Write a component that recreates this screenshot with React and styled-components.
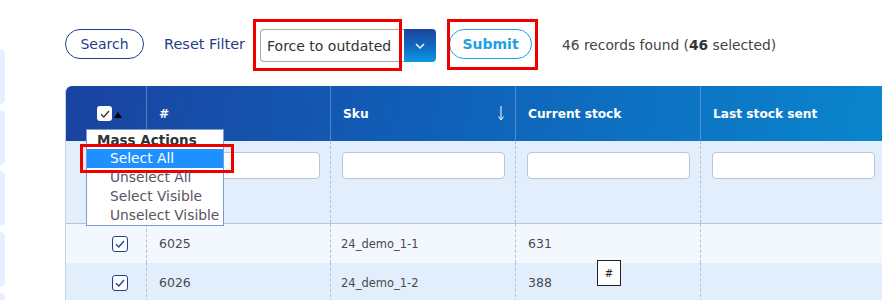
import React from "react";
import styled, { createGlobalStyle } from "styled-components";

const GlobalStyle = createGlobalStyle`
  html, body { margin: 0; padding: 0; background: #fff; }
  body { font-family: "DejaVu Sans", "Open Sans", sans-serif; overflow: hidden; width: 882px; height: 300px; }
  * { box-sizing: border-box; }
`;

const Page = styled.div`
  display: flex;
  width: 882px;
  height: 300px;
  overflow: hidden;
`;

const Rail = styled.div`
  display: flex;
  flex-direction: column;
  gap: 6px;
  padding-top: 49px;
  width: 5px;
  flex: none;
`;

const RailTab = styled.div`
  flex: none;
  height: 55px;
  background: #e4efff;
  border-radius: 0 6px 6px 0;
`;

const Main = styled.div`
  margin-left: 60px;
  padding-top: 29px;
  flex: 1;
  min-width: 0;
`;

const Toolbar = styled.div`
  display: flex;
  align-items: flex-start;
  height: 33px;
`;

const PillButton = styled.button`
  height: 30px;
  width: ${(p) => p.$w}px;
  padding: 0;
  border-radius: 15px;
  background: #fff;
  border: 1px solid ${(p) => p.$color};
  color: ${(p) => p.$color};
  font-family: inherit;
  font-size: 14px;
  font-weight: ${(p) => p.$weight};
  cursor: pointer;
`;

const LinkText = styled.span`
  color: #1f3d8a;
  font-size: 14.5px;
  font-weight: 500;
  line-height: 30px;
  margin: 0 15px 0 20px;
  white-space: nowrap;
`;

const Highlight = styled.div`
  position: relative;
  display: flex;
  margin-left: ${(p) => p.$ml ?? 0}px;
  &::after {
    content: "";
    position: absolute;
    left: ${(p) => p.$l}px;
    top: ${(p) => p.$t}px;
    right: ${(p) => p.$r}px;
    bottom: ${(p) => p.$b}px;
    border: 3px solid #ee0000;
    pointer-events: none;
  }
`;

const SelectBox = styled.div`
  width: 144px;
  height: 33px;
  border: 1px solid #a9a9a9;
  border-right: none;
  border-radius: 4px 0 0 4px;
  display: flex;
  align-items: center;
  padding-left: 6px;
  color: #333;
  font-size: 14px;
  white-space: nowrap;
`;

const SelectArrow = styled.div`
  width: 32px;
  height: 33px;
  border-radius: 0 4px 4px 0;
  background: linear-gradient(180deg, #1f449c 0%, #1167bf 50%, #0a9be3 100%);
  display: flex;
  align-items: center;
  justify-content: center;
`;

const Count = styled.span`
  color: #444;
  font-size: 13.8px;
  line-height: 32px;
  margin-left: 30px;
  white-space: nowrap;
  b { font-weight: 700; color: #333; }
`;

const Table = styled.div`
  position: relative;
  margin-top: 24px;
  display: grid;
  grid-template-columns: 81px 184px 185px 185px 185px;
  width: 820px;
  border-left: 1px solid #c2d0e4;
  border-top-left-radius: 6px;
`;

const HeadRow = styled.div`
  grid-column: 1 / -1;
  display: grid;
  grid-template-columns: subgrid;
  height: 55px;
  background: linear-gradient(100deg, #1a43a0 0%, #1060b8 45%, #0a86cd 100%);
  border-top-left-radius: 6px;
`;

const HeadCell = styled.div`
  display: flex;
  align-items: center;
  padding-left: ${(p) => p.$pl ?? 12}px;
  padding-right: 10px;
  color: #fff;
  font-size: 12.2px;
  font-weight: 700;
  border-right: 1px solid rgba(160, 190, 235, 0.45);
  justify-content: ${(p) => (p.$between ? "space-between" : "flex-start")};
`;

const FilterRow = styled.div`
  grid-column: 1 / -1;
  display: grid;
  grid-template-columns: subgrid;
  height: 83px;
  background: #e3eefc;
  border-bottom: 1px solid #b6c4d9;
`;

const Cell = styled.div`
  border-right: 1px dashed #b3bfd2;
  display: flex;
  align-items: ${(p) => (p.$top ? "flex-start" : "center")};
  padding-left: ${(p) => p.$pl ?? 12}px;
  padding-top: ${(p) => (p.$top ? 11 : 0)}px;
  padding-right: ${(p) => p.$pr ?? 0}px;
  color: #4a4a4a;
  font-size: ${(p) => p.$fs ?? 12.5}px;
`;

const FilterInput = styled.div`
  width: 100%;
  height: 27px;
  background: #fff;
  border: 1px solid #b8c6da;
  border-radius: 4px;
`;

const Row = styled.div`
  grid-column: 1 / -1;
  display: grid;
  grid-template-columns: subgrid;
  height: ${(p) => p.$h}px;
  background: ${(p) => (p.$alt ? "#e3eefc" : "#f3f8ff")};
`;

const Check = styled.div`
  width: 16px;
  height: 16px;
  border: 1.5px solid #1f3f8f;
  border-radius: 3px;
  background: #fff;
  display: flex;
  align-items: center;
  justify-content: center;
`;

const HeadCheck = styled.div`
  width: 15px;
  height: 15px;
  border-radius: 3px;
  background: #fff;
  display: flex;
  align-items: center;
  justify-content: center;
`;

const Caret = styled.span`
  width: 0;
  height: 0;
  margin-left: 2px;
  border-left: 4px solid transparent;
  border-right: 4px solid transparent;
  border-bottom: 6px solid #000;
  margin-top: 2px;
`;

const MassMenu = styled.div`
  position: absolute;
  left: 20px;
  top: 43px;
  width: 138px;
  background: #fff;
  border: 1px solid #7d9bd3;
  padding-top: 1px;
  z-index: 2;
`;

const MenuTitle = styled.div`
  font-size: 13.5px;
  font-weight: 700;
  color: #333;
  padding-left: 10px;
  height: 18px;
  line-height: 18px;
`;

const MenuItem = styled.div`
  position: relative;
  height: 19px;
  line-height: 19px;
  font-size: 13.8px;
  padding-left: 23px;
  color: ${(p) => (p.$active ? "#fff" : "#5a5460")};
  background: ${(p) => (p.$active ? "#1e90ff" : "transparent")};
  white-space: nowrap;
`;

const MenuMark = styled.div`
  position: absolute;
  left: -7px;
  top: -5px;
  width: 154px;
  height: 29px;
  border: 3px solid #ee0000;
  pointer-events: none;
`;

const Tip = styled.div`
  position: absolute;
  left: 531px;
  top: 174px;
  width: 24px;
  height: 26px;
  background: #fff;
  border: 1px solid #222;
  font-size: 10px;
  color: #222;
  display: flex;
  align-items: center;
  justify-content: center;
  z-index: 2;
`;

const CheckMark = ({ color }) => (
  <svg width="10" height="8" viewBox="0 0 10 8">
    <path d="M1 4.2 L3.8 7 L9 1" fill="none" stroke={color} strokeWidth="1.3" />
  </svg>
);

const Chevron = () => (
  <svg width="10" height="6" viewBox="0 0 10 6">
    <path d="M1 1 L5 5 L9 1" fill="none" stroke="#fff" strokeWidth="1.4" />
  </svg>
);

const DownArrow = () => (
  <svg width="8" height="15" viewBox="0 0 8 15">
    <path d="M4 0 V13 M1.5 10.5 L4 14 L6.5 10.5" fill="none" stroke="#fff" strokeWidth="1" />
  </svg>
);

const rows = [
  { id: "6025", sku: "24_demo_1-1", stock: "631", h: 39 },
  { id: "6026", sku: "24_demo_1-2", stock: "388", h: 39, alt: true },
];

export default function App() {
  return (
    <>
      <GlobalStyle />
      <Page>
        <Rail>
          {[0, 1, 2, 3, 4].map((i) => (
            <RailTab key={i} />
          ))}
        </Rail>
        <Main>
          <Toolbar>
            <PillButton $color="#1f3d8a" $weight={500} $w={79}>
              Search
            </PillButton>
            <LinkText>Reset Filter</LinkText>
            <Highlight $l={-7} $t={-10} $r={34} $b={-9}>
              <SelectBox>Force to outdated</SelectBox>
              <SelectArrow>
                <Chevron />
              </SelectArrow>
            </Highlight>
            <Highlight $ml={13} $l={-2} $t={-10} $r={-6} $b={-11}>
              <PillButton $color="#22a0e3" $weight={700} $w={83}>
                Submit
              </PillButton>
            </Highlight>
            <Count>
              46 records found (<b>46</b> selected)
            </Count>
          </Toolbar>

          <Table>
            <HeadRow>
              <HeadCell $pl={31}>
                <HeadCheck>
                  <CheckMark color="#333" />
                </HeadCheck>
                <Caret />
              </HeadCell>
              <HeadCell>#</HeadCell>
              <HeadCell $between>
                <span>Sku</span>
                <DownArrow />
              </HeadCell>
              <HeadCell>Current stock</HeadCell>
              <HeadCell>Last stock sent</HeadCell>
            </HeadRow>
            <FilterRow>
              <Cell />
              <Cell $top $pl={11} $pr={10} style={{ marginLeft: -70 }}>
                <FilterInput />
              </Cell>
              <Cell $top $pl={11} $pr={10}>
                <FilterInput />
              </Cell>
              <Cell $top $pl={11} $pr={10}>
                <FilterInput />
              </Cell>
              <Cell $top $pl={11} $pr={10}>
                <FilterInput />
              </Cell>
            </FilterRow>
            {rows.map((r) => (
              <Row key={r.id} $h={r.h} $alt={r.alt}>
                <Cell $pl={46}>
                  <Check>
                    <CheckMark color="#1f3f8f" />
                  </Check>
                </Cell>
                <Cell>{r.id}</Cell>
                <Cell $pl={10} $fs={11.5}>{r.sku}</Cell>
                <Cell>{r.stock}</Cell>
                <Cell />
              </Row>
            ))}
            <MassMenu>
              <MenuTitle>Mass Actions</MenuTitle>
              <MenuItem $active>
                Select All
                <MenuMark />
              </MenuItem>
              <MenuItem>Unselect All</MenuItem>
              <MenuItem>Select Visible</MenuItem>
              <MenuItem>Unselect Visible</MenuItem>
            </MassMenu>
            <Tip>#</Tip>
          </Table>
        </Main>
      </Page>
    </>
  );
}
